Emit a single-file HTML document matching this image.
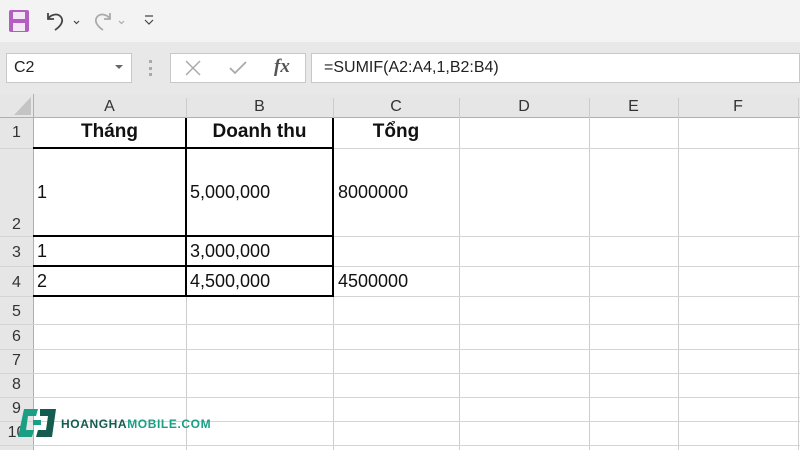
<!DOCTYPE html>
<html><head><meta charset="utf-8"><style>
*{margin:0;padding:0;box-sizing:border-box}
body{width:800px;height:450px;overflow:hidden;background:#fff;font-family:"Liberation Sans","DejaVu Sans",sans-serif;position:relative}
.a{position:absolute}
.hl{position:absolute;height:1px;background:#d4d4d4}
.vl{position:absolute;width:1px;background:#d4d4d4}
.bh{position:absolute;height:2px;background:#000}
.bv{position:absolute;width:2px;background:#000}
.ch{position:absolute;top:94px;height:24px;font-size:16px;color:#333;text-align:center;line-height:26px}
.rh{position:absolute;left:0;width:33px;font-size:16px;color:#333;text-align:center}
.c{position:absolute;font-size:18px;color:#111}
.b{font-weight:bold;text-align:center;font-size:19px}
</style></head><body>
<div class="a" style="left:0;top:0;width:800px;height:42px;background:#f3f3f3"></div>
<div class="a" style="left:0;top:42px;width:800px;height:52px;background:#e8e8e8"></div>
<svg class="a" style="left:8px;top:9px" width="22" height="24" viewBox="0 0 22 24"><rect x="1" y="1" width="20" height="22" rx="2" fill="#b25fc0"/><rect x="5" y="3" width="12" height="7" fill="#f3e6f5"/><rect x="5" y="14" width="12" height="8" fill="#f3e6f5"/></svg>
<svg class="a" style="left:44px;top:10px" width="40" height="22" viewBox="0 0 40 22"><path d="M4 3v6h6M4 9c3-5 10-6 13-2s0 9-6 13" fill="none" stroke="#444" stroke-width="1.8"/><path d="M30 11l2.5 2.5 2.5-2.5" fill="none" stroke="#444" stroke-width="1.2"/></svg>
<svg class="a" style="left:90px;top:10px" width="40" height="22" viewBox="0 0 40 22"><path d="M20 3v6h-6M20 9c-3-5-10-6-13-2s0 9 6 13" fill="none" stroke="#aaa" stroke-width="1.8"/><path d="M29 11l2.5 2.5 2.5-2.5" fill="none" stroke="#aaa" stroke-width="1.2"/></svg>
<svg class="a" style="left:143px;top:14px" width="12" height="12" viewBox="0 0 12 12"><path d="M2 2h8M2 6l4 4 4-4" fill="none" stroke="#444" stroke-width="1.2"/></svg>
<div class="a" style="left:6px;top:53px;width:126px;height:30px;background:#fff;border:1px solid #c8c8c8;font-size:16px;line-height:28px;padding-left:7px;color:#222">C2</div>
<svg class="a" style="left:114px;top:64px" width="10" height="6"><path d="M1 1h8l-4 4z" fill="#666"/></svg>
<div class="a" style="left:149px;top:60px;width:3px;height:16px;border-left:3px dotted #aaa"></div>
<div class="a" style="left:170px;top:53px;width:136px;height:30px;background:#fff;border:1px solid #c8c8c8"></div>
<svg class="a" style="left:184px;top:60px" width="18" height="16"><path d="M2 1l14 14M16 1L2 15" stroke="#aaa" stroke-width="1.5"/></svg>
<svg class="a" style="left:228px;top:60px" width="20" height="16"><path d="M2 8l5 5L18 2" fill="none" stroke="#aaa" stroke-width="1.8"/></svg>
<div class="a" style="left:274px;top:56px;font-family:'Liberation Serif',serif;font-style:italic;font-weight:bold;font-size:19px;color:#555">fx</div>
<div class="a" style="left:311px;top:53px;width:489px;height:30px;background:#fff;border:1px solid #c8c8c8;font-size:16px;line-height:28px;padding-left:12px;color:#222">=SUMIF(A2:A4,1,B2:B4)</div>
<div class="a" style="left:0;top:94px;width:800px;height:24px;background:#e6e6e6"></div>
<div class="a" style="left:0;top:94px;width:33px;height:356px;background:#e6e6e6"></div>
<svg class="a" style="left:14px;top:97px" width="17" height="18"><path d="M17 0V18H0z" fill="#c4c4c4"/></svg>
<div class="a" style="left:0;top:117px;width:800px;height:1px;background:#b0b0b0"></div>
<div class="a" style="left:33px;top:94px;width:1px;height:356px;background:#b0b0b0"></div>
<div class="ch" style="left:33px;width:153px">A</div>
<div class="ch" style="left:186px;width:147px">B</div>
<div class="ch" style="left:333px;width:126px">C</div>
<div class="ch" style="left:459px;width:130px">D</div>
<div class="ch" style="left:589px;width:89px">E</div>
<div class="ch" style="left:678px;width:120px">F</div>
<div class="vl" style="left:186px;top:98px;height:352px;background:#ccc"></div>
<div class="vl" style="left:333px;top:98px;height:352px;background:#ccc"></div>
<div class="vl" style="left:459px;top:98px;height:352px;background:#ccc"></div>
<div class="vl" style="left:589px;top:98px;height:352px;background:#ccc"></div>
<div class="vl" style="left:678px;top:98px;height:352px;background:#ccc"></div>
<div class="vl" style="left:798px;top:98px;height:352px;background:#ccc"></div>
<div class="hl" style="left:0;top:148px;width:800px"></div>
<div class="hl" style="left:0;top:236px;width:800px"></div>
<div class="hl" style="left:0;top:266px;width:800px"></div>
<div class="hl" style="left:0;top:296px;width:800px"></div>
<div class="hl" style="left:0;top:324px;width:800px"></div>
<div class="hl" style="left:0;top:349px;width:800px"></div>
<div class="hl" style="left:0;top:373px;width:800px"></div>
<div class="hl" style="left:0;top:397px;width:800px"></div>
<div class="hl" style="left:0;top:421px;width:800px"></div>
<div class="hl" style="left:0;top:445px;width:800px"></div>
<div class="rh" style="top:124px">1</div>
<div class="rh" style="top:216px">2</div>
<div class="rh" style="top:244px">3</div>
<div class="rh" style="top:274px">4</div>
<div class="rh" style="top:303px">5</div>
<div class="rh" style="top:328px">6</div>
<div class="rh" style="top:352px">7</div>
<div class="rh" style="top:376px">8</div>
<div class="rh" style="top:400px">9</div>
<div class="rh" style="top:424px">10</div>
<div class="bh" style="left:33px;top:147px;width:301px"></div>
<div class="bh" style="left:33px;top:235px;width:301px"></div>
<div class="bh" style="left:33px;top:265px;width:301px"></div>
<div class="bh" style="left:33px;top:295px;width:301px"></div>
<div class="bv" style="left:185px;top:118px;height:179px"></div>
<div class="bv" style="left:332px;top:118px;height:179px"></div>
<div class="c b" style="left:33px;top:121px;width:153px">Tháng</div>
<div class="c b" style="left:186px;top:121px;width:147px">Doanh thu</div>
<div class="c b" style="left:333px;top:121px;width:126px">Tổng</div>
<div class="c" style="left:37px;top:182px">1</div>
<div class="c" style="left:190px;top:182px">5,000,000</div>
<div class="c" style="left:338px;top:182px">8000000</div>
<div class="c" style="left:37px;top:241px">1</div>
<div class="c" style="left:190px;top:241px">3,000,000</div>
<div class="c" style="left:37px;top:271px">2</div>
<div class="c" style="left:190px;top:271px">4,500,000</div>
<div class="c" style="left:338px;top:271px">4500000</div>
<svg class="a" style="left:16px;top:409px" width="42" height="28" viewBox="0 0 42 28"><path d="M8 0h14l-2 7h-8l-2 14h8l-2 7H2z" fill="#1a9e84"/><path d="M24 0h16l-4 28H20l2-7h8l2-14h-8z" fill="#135c4f"/><rect x="17" y="11" width="8" height="5" fill="#1a9e84"/></svg>
<div class="a" style="left:61px;top:417px;font-size:12px;font-weight:bold;letter-spacing:0.6px;color:#135c4f">HOANGHA<span style="color:#1a9e84">MOBILE.COM</span></div>
</body></html>
